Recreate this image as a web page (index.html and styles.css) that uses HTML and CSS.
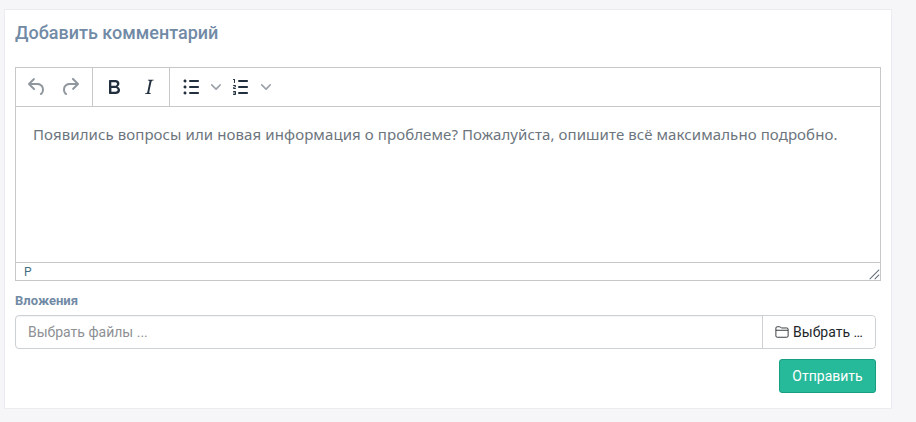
FILE: index.html
```html
<!DOCTYPE html>
<html lang="ru">
<head>
<meta charset="utf-8">
<title>Добавить комментарий</title>
<link rel="stylesheet" href="styles.css">
</head>
<body>
<section class="card">
  <h2 class="title">Добавить комментарий</h2>
  <div class="editor">
    <div class="toolbar">
      <div class="group group-history">
        <button class="tool muted" type="button"><svg width="24" height="24" viewBox="0 0 24 24"><path d="M6.4 8H12c3.7 0 6.2 2 6.8 5.1.6 2.7-.4 5.6-2.3 6.8a1 1 0 0 1-1-1.8c1.1-.6 1.8-2.7 1.4-4.6-.5-2.1-2.1-3.5-4.9-3.5H6.4l3.3 3.3a1 1 0 1 1-1.4 1.4l-5-5a1 1 0 0 1 0-1.4l5-5a1 1 0 0 1 1.4 1.4L6.4 8z"/></svg></button>
        <button class="tool muted" type="button"><svg width="24" height="24" viewBox="0 0 24 24"><path d="M17.6 10H12c-2.8 0-4.4 1.4-4.9 3.5-.4 2 .3 4 1.4 4.6a1 1 0 1 1-1 1.8c-2-1.2-2.9-4.1-2.3-6.8.6-3 3-5.1 6.8-5.1h5.6l-3.3-3.3a1 1 0 1 1 1.4-1.4l5 5a1 1 0 0 1 0 1.4l-5 5a1 1 0 0 1-1.4-1.4l3.3-3.3z"/></svg></button>
      </div>
      <div class="group group-format">
        <button class="tool" type="button"><svg width="24" height="24" viewBox="0 0 24 24"><path d="M7.8 19c-.3 0-.5 0-.6-.2l-.2-.5V5.7c0-.2 0-.4.2-.5l.6-.2h5c1.5 0 2.7.3 3.5 1 .7.6 1.1 1.4 1.1 2.5a3 3 0 0 1-.6 1.9c-.4.6-1 1-1.6 1.2.4.1.9.3 1.3.6s.8.7 1 1.2c.4.4.5 1 .5 1.6 0 1.3-.4 2.3-1.3 3-.8.7-2.1 1-3.8 1H7.8zm5-8.3c.6 0 1.2-.1 1.6-.5.4-.3.6-.7.6-1.3 0-1.1-.8-1.7-2.3-1.7H9.3v3.5h3.4zm.5 6c.7 0 1.3-.1 1.7-.4.4-.4.6-.9.6-1.5s-.2-1-.7-1.4c-.4-.3-1-.4-2-.4H9.4v3.8h4z"/></svg></button>
        <button class="tool" type="button"><svg width="24" height="24" viewBox="0 0 24 24"><path d="M16.7 4.7l-.1.9h-.3c-.6 0-1 0-1.4.3-.3.3-.4.6-.5 1.1l-2.1 9.8v.6c0 .5.4.8 1.4.8h.2l-.2.8H8l.2-.8h.2c1.1 0 1.8-.5 2-1.5l2-9.8.1-.5c0-.6-.4-.8-1.4-.8h-.3l.2-.9h5.8z"/></svg></button>
      </div>
      <div class="group group-lists">
        <button class="split" type="button"><svg width="24" height="24" viewBox="0 0 24 24"><path d="M11 5h8c.6 0 1 .4 1 1s-.4 1-1 1h-8a1 1 0 0 1 0-2zm0 6h8c.6 0 1 .4 1 1s-.4 1-1 1h-8a1 1 0 0 1 0-2zm0 6h8c.6 0 1 .4 1 1s-.4 1-1 1h-8a1 1 0 0 1 0-2zM4.500 6c0-.4.1-.8.4-1 .3-.4.7-.5 1.100-.5.4 0 .8.100 1 .4.4.3.5.7.5 1.100 0 .4-.1.8-.4 1-.3.4-.7.5-1.100.5-.4 0-.8-.1-1-.4-.4-.3-.5-.7-.5-1.100zm0 6c0-.4.1-.8.4-1 .3-.4.7-.5 1.100-.5.4 0 .8.100 1 .4.4.3.5.7.5 1.100 0 .4-.1.8-.4 1-.3.4-.7.5-1.100.5-.4 0-.8-.1-1-.4-.4-.3-.5-.7-.5-1.100zm0 6c0-.4.1-.8.4-1 .3-.4.7-.5 1.100-.5.4 0 .8.100 1 .4.4.3.5.7.5 1.100 0 .4-.1.8-.4 1-.3.4-.7.5-1.100.5-.4 0-.8-.1-1-.4-.4-.3-.5-.7-.5-1.100z"/></svg><svg class="chev" width="10" height="10" viewBox="0 0 10 10"><path d="M8.7 2.2c.3-.3.8-.3 1 0 .4.4.4.9 0 1.2L5.700 7.800c-.3.3-.9.3-1.200 0L.2 3.400a.8.8 0 0 1 0-1.200c.3-.3.8-.3 1.100 0L5 6l3.700-3.800z"/></svg></button>
        <button class="split" type="button"><svg width="24" height="24" viewBox="0 0 24 24"><path d="M10 17h8c.6 0 1 .4 1 1s-.4 1-1 1h-8a1 1 0 0 1 0-2zm0-6h8c.6 0 1 .4 1 1s-.4 1-1 1h-8a1 1 0 0 1 0-2zm0-6h8c.6 0 1 .4 1 1s-.4 1-1 1h-8a1 1 0 1 1 0-2zM6 4v3.500c0 .3-.2.5-.5.5a.5.5 0 0 1-.5-.5V5h-.5a.5.5 0 0 1 0-1H6zm-1 8.800l.2.2h1.300c.3 0 .5.2.5.5s-.2.5-.5.5H4.900a1 1 0 0 1-.9-1V13c0-.4.3-.8.6-1l1.200-.4.2-.3a.2.2 0 0 0-.2-.2H4.500a.5.5 0 0 1-.5-.5c0-.3.2-.5.5-.5h1.600c.5 0 .9.4.9 1v.100c0 .4-.3.8-.6 1l-1.200.4-.2.3zM7 17v2c0 .6-.4 1-1 1H4.500a.5.5 0 0 1 0-1h1.200c.2 0 .3-.1.3-.3 0-.2-.1-.3-.3-.3H4.400a.4.4 0 1 1 0-.8h1.300c.2 0 .3-.1.3-.3 0-.2-.1-.3-.3-.3H4.500a.5.5 0 1 1 0-1H6c.6 0 1 .4 1 1z"/></svg><svg class="chev" width="10" height="10" viewBox="0 0 10 10"><path d="M8.700 2.200c.3-.3.8-.3 1 0 .4.4.4.9 0 1.200L5.700 7.800c-.3.3-.9.3-1.200 0L.2 3.400a.8.8 0 0 1 0-1.200c.3-.3.8-.3 1.100 0L5 6l3.700-3.800z"/></svg></button>
      </div>
    </div>
    <div class="content">
      <p class="placeholder">Появились вопросы или новая информация о проблеме? Пожалуйста, опишите всё максимально подробно.</p>
    </div>
    <div class="statusbar">
      <span class="path">P</span>
      <svg class="grip" width="12" height="12" viewBox="0 0 12 12"><path d="M10.600 1.600l-9 9a.5.5 0 0 0 .7.7l9-9a.5.5 0 0 0-.7-.7zm0 5l-4 4a.5.5 0 0 0 .7.7l4-4a.5.5 0 0 0-.7-.7z"/></svg>
    </div>
  </div>
  <label class="label">Вложения</label>
  <div class="file">
    <div class="file-name">Выбрать файлы ...</div>
    <button class="file-btn" type="button"><svg width="14" height="14" viewBox="0 0 16 16"><path d="M1 3.500A1.500 1.500 0 0 1 2.500 2h2.800a1.500 1.500 0 0 1 1.100.5l.8.900h6.300A1.500 1.500 0 0 1 15 4.900v7.600a1.500 1.500 0 0 1-1.500 1.500h-11A1.500 1.500 0 0 1 1 12.500z M1 6h14" fill="none" stroke="#212529" stroke-width="1"/></svg><span>Выбрать …</span></button>
  </div>
  <div class="actions">
    <button class="submit" type="button">Отправить</button>
  </div>
</section>
</body>
</html>
```
FILE: styles.css
```css
* { box-sizing: border-box; }
html, body { height: 100%; }
body {
  margin: 0;
  padding: 9px 24px 0 4px;
  background: #f6f6f8;
  font-family: "Roboto", "Liberation Sans", sans-serif;
  overflow: hidden;
}
.card {
  width: 888px;
  height: 400px;
  background: #fff;
  border: 1px solid #ebebf0;
  padding: 10px;
}
.title {
  margin: 0;
  height: 47px;
  padding-top: 1px;
  font-size: 18px;
  line-height: 24px;
  font-weight: 500;
  color: #718aa5;
}
.editor {
  border: 1px solid #c8c8c8;
  height: 214px;
  display: flex;
  flex-direction: column;
}
.toolbar {
  height: 39px;
  display: flex;
  border-bottom: 1px solid #c8c8c8;
}
.group {
  display: flex;
  align-items: center;
  border-right: 1px solid #c8c8c8;
  padding: 0 4px;
  height: 38px;
}
.group-history { width: 77px; justify-content: flex-start; padding: 0 0 0 4px; }
.group-format { width: 77px; justify-content: flex-start; padding: 0 0 0 3px; }
.group-lists { border-right: 0; padding-left: 4px; gap: 1px; }
.tool, .split {
  background: none;
  border: 0;
  padding: 0;
  display: flex;
  align-items: center;
  justify-content: center;
  height: 34px;
}
.tool { width: 35px; }
.group-history .tool { width: 33px; }
.split { width: 49px; justify-content: flex-start; padding-left: 5px; gap: 8px; }
.tool svg, .split svg { fill: #222f3e; }
.tool.muted svg { fill: rgba(34, 47, 62, .5); }
.split .chev { fill: rgba(34, 47, 62, .45); }
.content {
  flex: 1;
  padding: 0 17px;
}
.placeholder {
  margin: 0;
  padding-top: 17px;
  font-family: "Noto Sans", "Open Sans", sans-serif;
  font-size: 15px;
  letter-spacing: .09px;
  line-height: 20px;
  color: #6c757d;
}
.statusbar {
  height: 18px;
  border-top: 1px solid #c8c8c8;
  display: flex;
  align-items: center;
  justify-content: space-between;
  padding: 0 0 0 8px;
}
.path {
  font-size: 12px;
  color: #3f6f80;
  line-height: 16px;
  text-transform: uppercase;
}
.grip { fill: #5e6772; align-self: flex-end; }
.label {
  display: block;
  margin-top: 12px;
  height: 22px;
  font-size: 13px;
  line-height: 15px;
  font-weight: 700;
  color: #718aa5;
}
.file {
  display: flex;
  width: 861px;
  height: 34px;
  border: 1px solid #cdd0d4;
  border-radius: 4px;
  box-shadow: inset 0 1px 1px rgba(0,0,0,.04);
}
.file-name {
  flex: 1;
  padding: 0 12px;
  font-size: 14px;
  line-height: 32px;
  color: #8d9094;
}
.file-btn {
  width: 113px;
  border: 0;
  border-left: 1px solid #cdd0d4;
  background: #fff;
  border-radius: 0 4px 4px 0;
  display: flex;
  align-items: center;
  justify-content: center;
  gap: 4px;
  padding: 0;
  font-family: inherit;
  font-size: 14px;
  color: #212529;
}
.actions {
  display: flex;
  justify-content: flex-end;
  width: 861px;
  margin-top: 10px;
}
.submit {
  width: 97px;
  height: 34px;
  background: #26b99a;
  border: 1px solid #169f85;
  border-radius: 3px;
  color: #fff;
  font-family: inherit;
  font-size: 14px;
  padding: 0;
}
```
